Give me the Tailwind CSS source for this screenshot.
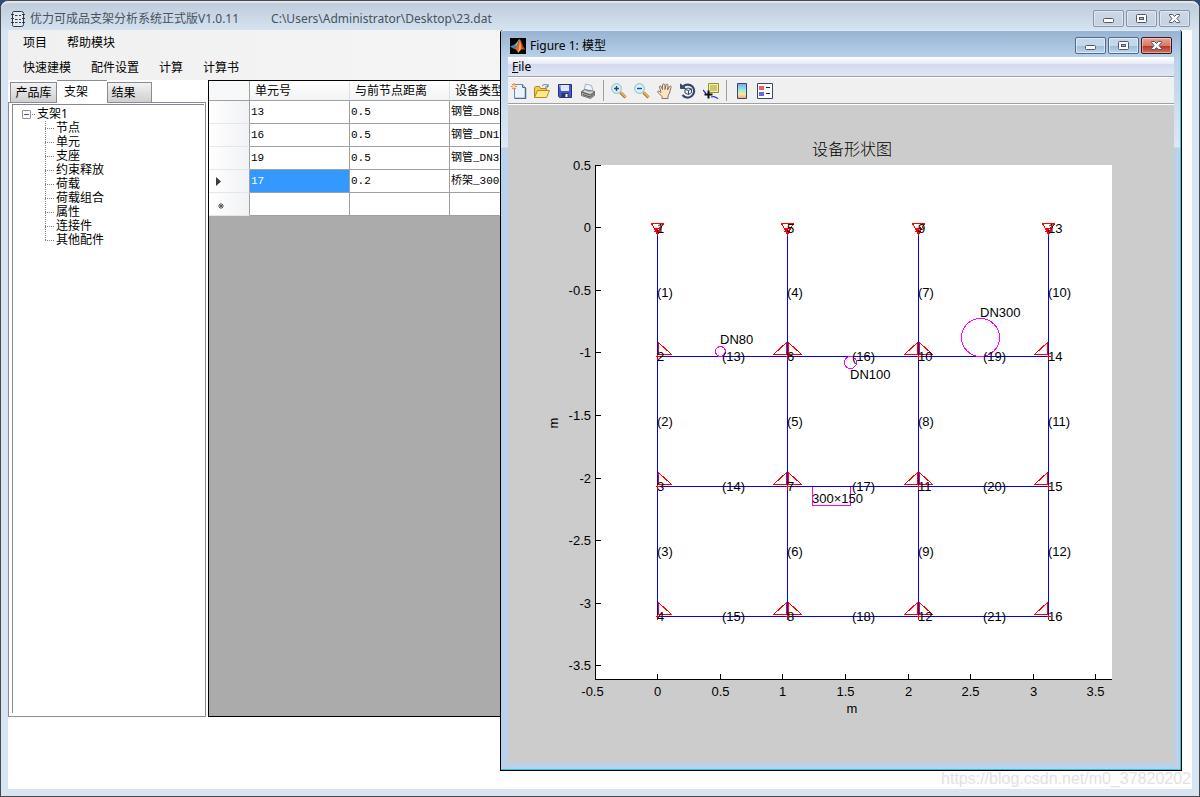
<!DOCTYPE html>
<html lang="zh-CN">
<head>
    <meta charset="UTF-8">
    <meta name="viewport" content="width=device-width, initial-scale=1.0">
    <title>优力可成品支架分析系统</title>
    <script src="https://cdn.jsdelivr.net/npm/@tailwindcss/browser@4"></script>
</head>
<body class="h-screen overflow-hidden bg-[#2b4a80] font-['Noto_Sans','Noto_Sans_CJK_SC',sans-serif] text-xs text-black">

    <!-- main window -->
    <div class="relative flex h-screen flex-col rounded-t-lg border border-[#4a4a4c] bg-[#d7e4f2]">
        <header class="flex h-[29px] shrink-0 items-center rounded-t-lg border-t-2 border-[#dfe6ee] bg-linear-to-b from-[#bfccdb] to-[#d5e3f1] pr-[9px] pl-[10px] text-[#46525f]">
            <svg class="mt-1 h-4 w-4" viewBox="0 0 16 16" fill="none" stroke="#333a42" stroke-width="1">
                <path d="M2.500.5h8q2 0 2 2v11q0 2-2 2h-8q-1 0-1-2v-11q0-2 1-2z" fill="#e3e9f0"/>
                <path d="M0 3.500h3M0 7.500h3M0 11.500h3M11 3.500h3M11 7.500h3M11 11.500h3M4 4.500h2.500M8 4.500h2M4 8.500h2.500M8 8.500h2M4 11.500h2.500M8 11.500h2"/>
            </svg>
            <h1 class="mt-1 ml-[3px] whitespace-nowrap">优力可成品支架分析系统正式版V1.0.11</h1>
            <span class="mt-1 ml-8 whitespace-nowrap">C:\Users\Administrator\Desktop\23.dat</span>
            <div class="mt-1 ml-auto flex gap-[2px]">
                <button aria-label="最小化" class="grid h-[17px] w-[31px] place-items-center rounded-[2px] border border-[#8792ab] bg-linear-to-b from-[#ccd8e6] to-[#c3d1e2] ring-1 ring-white/40 ring-inset">
                    <svg class="h-[13px] w-[13px]" viewBox="0 0 13 13"><rect x="1.500" y="6.500" width="10" height="4" rx="1" fill="#fff" stroke="#535666"/></svg>
                </button>
                <button aria-label="最大化" class="grid h-[17px] w-[31px] place-items-center rounded-[2px] border border-[#8792ab] bg-linear-to-b from-[#ccd8e6] to-[#c3d1e2] ring-1 ring-white/40 ring-inset">
                    <svg class="h-[13px] w-[13px]" viewBox="0 0 13 13" stroke="#535666"><rect x="1.500" y="2.500" width="10" height="8" rx="1" fill="#fff"/><rect x="4.500" y="5.500" width="4" height="2" fill="#b5c2d8"/></svg>
                </button>
                <button aria-label="关闭" class="grid h-[17px] w-[31px] place-items-center rounded-[2px] border border-[#8792ab] bg-linear-to-b from-[#ccd8e6] to-[#c3d1e2] ring-1 ring-white/40 ring-inset">
                    <svg class="h-[13px] w-[13px]" viewBox="0 0 13 13"><path d="M1.500 2.500h3l2 2 2-2h3v1L9 6.500l2.500 3v1h-3l-2-2-2 2h-3v-1L4 6.500l-2.500-3z" fill="#fff" stroke="#535666"/></svg>
                </button>
            </div>
        </header>

        <div class="mx-[7px] mb-[7px] flex min-h-0 flex-1 flex-col bg-white">
            <nav class="shrink-0 bg-linear-to-r from-[#f0f0f0] to-[#fcfcfc]">
                <div class="flex h-[25px] items-center gap-5 pl-[15px]">
                    <button>项目</button>
                    <button>帮助模块</button>
                </div>
                <div class="flex h-[25px] items-center gap-5 pl-[15px]">
                    <button>快速建模</button>
                    <button>配件设置</button>
                    <button>计算</button>
                    <button>计算书</button>
                </div>
            </nav>

            <div class="mb-[72px] flex min-h-0 flex-1 gap-[2px]">
                <!-- tabs and tree -->
                <aside class="flex w-[198px] shrink-0 flex-col">
                    <div class="flex h-[22px] items-end pl-[2px]" role="tablist">
                        <button role="tab" class="h-5 w-[47px] border border-b-0 border-[#898c95] bg-linear-to-b from-[#f2f2f2] to-[#cfcfcf] leading-5">产品库</button>
                        <button role="tab" aria-selected="true" class="relative -mb-px h-[23px] w-[50px] border-t border-[#898c95] bg-white pr-3 leading-5">支架</button>
                        <button role="tab" class="h-5 w-[45px] border border-b-0 border-[#898c95] bg-linear-to-b from-[#f2f2f2] to-[#cfcfcf] pr-3 leading-5">结果</button>
                    </div>
                    <div class="flex-1 border border-[#898c95] pt-px pr-px pb-[3px] pl-[3px]">
                        <div class="h-full border-t border-l border-[#828790] pt-[2px] pl-[9px]">
                            <div class="flex h-[14px] items-center leading-[14px]">
                                <button aria-label="折叠" class="grid h-[9px] w-[9px] place-items-center rounded-[1px] border border-[#919191] bg-white"><span class="h-px w-[5px] bg-[#3c5ba8]"></span></button>
                                <span class="mr-[2px] ml-px w-[3px] border-t border-dotted border-[#808080]"></span>
                                <span>支架1</span>
                            </div>
                            <ul class="relative pl-[23px] leading-[14px] before:absolute before:top-0 before:bottom-[7px] before:left-[23px] before:border-l before:border-dotted before:border-[#808080]">
                                <li class="flex h-[14px] items-center gap-[2px]"><span class="w-[9px] border-t border-dotted border-[#808080]"></span>节点</li>
                                <li class="flex h-[14px] items-center gap-[2px]"><span class="w-[9px] border-t border-dotted border-[#808080]"></span>单元</li>
                                <li class="flex h-[14px] items-center gap-[2px]"><span class="w-[9px] border-t border-dotted border-[#808080]"></span>支座</li>
                                <li class="flex h-[14px] items-center gap-[2px]"><span class="w-[9px] border-t border-dotted border-[#808080]"></span>约束释放</li>
                                <li class="flex h-[14px] items-center gap-[2px]"><span class="w-[9px] border-t border-dotted border-[#808080]"></span>荷载</li>
                                <li class="flex h-[14px] items-center gap-[2px]"><span class="w-[9px] border-t border-dotted border-[#808080]"></span>荷载组合</li>
                                <li class="flex h-[14px] items-center gap-[2px]"><span class="w-[9px] border-t border-dotted border-[#808080]"></span>属性</li>
                                <li class="flex h-[14px] items-center gap-[2px]"><span class="w-[9px] border-t border-dotted border-[#808080]"></span>连接件</li>
                                <li class="flex h-[14px] items-center gap-[2px]"><span class="w-[9px] border-t border-dotted border-[#808080]"></span>其他配件</li>
                            </ul>
                        </div>
                    </div>
                </aside>

                <!-- data grid -->
                <section class="mr-5 min-w-0 flex-1 overflow-hidden border border-black bg-[#ababab]">
                    <table class="w-[341px] table-fixed border-separate border-spacing-0 text-left">
                        <thead>
                            <tr class="h-5 bg-linear-to-b from-white to-[#f1f2f4]">
                                <th class="w-[41px] border-r border-b border-[#a0a0a0] bg-[#f7f8fa] p-0"></th>
                                <th class="w-25 border-r border-b border-r-[#dedfe1] border-b-[#a0a0a0] p-0 pl-[5px] leading-[18px] font-normal">单元号</th>
                                <th class="w-25 border-r border-b border-r-[#dedfe1] border-b-[#a0a0a0] p-0 pl-[5px] leading-[18px] font-normal">与前节点距离</th>
                                <th class="w-25 border-b border-[#a0a0a0] p-0 pl-[5px] leading-[18px] font-normal">设备类型</th>
                            </tr>
                        </thead>
                        <tbody class="bg-white font-['Liberation_Mono','Noto_Sans_CJK_SC',monospace] text-[11px] leading-4 [&_td]:border-r [&_td]:border-b [&_td]:border-[#a0a0a0] [&_td]:p-0 [&_td]:pl-px [&_th]:border-r [&_th]:border-b [&_th]:border-r-[#a0a0a0] [&_th]:border-b-[#e4e6e9] [&_th]:bg-linear-to-r [&_th]:from-white [&_th]:to-[#f1f2f5] [&_th]:p-0">
                            <tr class="h-[23px]"><th></th><td>13</td><td>0.5</td><td>钢管_DN8</td></tr>
                            <tr class="h-[23px]"><th></th><td>16</td><td>0.5</td><td>钢管_DN1</td></tr>
                            <tr class="h-[23px]"><th></th><td>19</td><td>0.5</td><td>钢管_DN3</td></tr>
                            <tr class="h-[23px]">
                                <th><svg class="ml-[7px] h-[9px] w-[5px]" viewBox="0 0 5 9"><path d="M0 0l5 4.500L0 9z" fill="#3c3c3c"/></svg></th>
                                <td class="bg-[#3399ff] text-white">17</td><td>0.2</td><td>桥架_300</td>
                            </tr>
                            <tr class="h-[23px]">
                                <th><svg class="mt-1 ml-[9px] h-[6px] w-[6px]" viewBox="0 0 6 6" stroke="#555"><path d="M3 0v6M0 3h6M1 1l4 4M5 1l-4 4"/></svg></th>
                                <td></td><td></td><td></td>
                            </tr>
                        </tbody>
                    </table>
                </section>
            </div>
        </div>

        <p class="absolute right-2 bottom-[7px] font-['Liberation_Sans',sans-serif] text-base leading-5 text-[#e2e2e2]">https://blog.csdn.net/m0_37820202</p>

        <!-- figure window -->
        <div class="absolute top-[29px] left-[499px] flex h-[741px] w-[682px] flex-col rounded-t-[3px] border border-t-0 border-black bg-[#b9d1ea]">
            <div class="relative flex min-h-0 flex-1 flex-col rounded-t-[3px] border-t border-r border-b border-t-[#dcebf8] border-r-[#2fc5dc] border-b-[#2fc5dc] bg-[linear-gradient(#98b3d1_0px,#b9d1ea_27px,#dce8f5_116px,#b9d1ea_117px)] pr-[6px] pb-[6px] pl-[7px]">
                <header class="flex h-[26px] shrink-0 items-center gap-[4px] pl-[2px]">
                    <svg class="mt-[3px] h-4 w-4" viewBox="0 0 16 16">
                        <rect width="16" height="16" fill="#000"/>
                        <path d="M0 8.500l4.500-2L6.500 8 4 11z" fill="#3b8fb5"/>
                        <path d="M4.500 6.500C7 5 7.500 2.500 9.500 1L7 9z" fill="#5fb3c9"/>
                        <path d="M4 11l2.500-3C8.500 6 8.500 2 9.800 1 11.500 2.500 13 9 15.500 12.500 13.500 10.500 12 11 10.500 12L8 15C7.500 13 6 11 4 11z" fill="#e2622a"/>
                        <path d="M9.800 1C10 5 9 9 8 15l2.500-3C11.500 9 10.500 4 9.800 1z" fill="#f6b24c"/>
                        <path d="M9.800 1c1.700 1.500 3.200 8 5.700 11.500-1.500-1-2-2-3-3z" fill="#8e2517"/>
                    </svg>
                    <h2 class="mt-[3px] whitespace-nowrap">Figure 1: 模型</h2>
                    <div class="mt-[3px] mr-[2px] ml-auto flex gap-[2px]">
                        <button aria-label="最小化" class="grid h-[17px] w-[31px] place-items-center rounded-[2px] border border-[#536a8b] bg-[linear-gradient(#c3d8ed_50%,#9dbad6_50%,#bdd6ec)] ring-1 ring-white/50 ring-inset">
                            <svg class="h-[13px] w-[13px]" viewBox="0 0 13 13"><rect x="1.500" y="6.500" width="10" height="4" rx="1" fill="#fff" stroke="#535666"/></svg>
                        </button>
                        <button aria-label="最大化" class="grid h-[17px] w-[31px] place-items-center rounded-[2px] border border-[#536a8b] bg-[linear-gradient(#c3d8ed_50%,#9dbad6_50%,#bdd6ec)] ring-1 ring-white/50 ring-inset">
                            <svg class="h-[13px] w-[13px]" viewBox="0 0 13 13" stroke="#535666"><rect x="1.500" y="2.500" width="10" height="8" rx="1" fill="#fff"/><rect x="4.500" y="5.500" width="4" height="2" fill="#8fb0d5"/></svg>
                        </button>
                        <button aria-label="关闭" class="grid h-[17px] w-[31px] place-items-center rounded-[2px] border border-[#431422] bg-[linear-gradient(#e8a398_0%,#d9796b_50%,#b5321d_50%,#cf7161)] ring-1 ring-white/40 ring-inset">
                            <svg class="h-[13px] w-[13px]" viewBox="0 0 13 13"><path d="M1.500 2.500h3l2 2 2-2h3v1L9 6.500l2.500 3v1h-3l-2-2-2 2h-3v-1L4 6.500l-2.500-3z" fill="#fff" stroke="#535666"/></svg>
                        </button>
                    </div>
                </header>

                <nav class="flex h-5 shrink-0 items-center border-b border-[#a0a0a0] bg-[linear-gradient(#ffffff_0%,#e8ebf6_35%,#d4d9ee_36%,#e1e6f6_100%)] pl-1">
                    <button><u>F</u>ile</button>
                </nav>

                <div class="flex h-[27px] shrink-0 items-center border-t border-b border-t-white border-b-[#a0a0a0] bg-[#f0f0f0]">
                    <button aria-label="新建" class="flex h-6 w-[23px] items-center pl-[3px]"><svg class="h-4 w-4" viewBox="0 0 16 16"><path d="M3.500 1.500h8l3 3v11h-11z" fill="#eaf3fd" stroke="#7288ae"/><path d="M11.500 1.500v3h3" fill="#b8d0f0" stroke="#52688f"/><path d="M14.500 5v10.500H4" fill="none" stroke="#52688f" stroke-width="1.500"/><path d="M3 0v7M0 3.500h6M1 1l4 5M5 1L1 6" stroke="#e67a50"/><circle cx="3" cy="3.500" r="1.500" fill="#ffdc86"/></svg></button>
                    <button aria-label="打开" class="flex h-6 w-[23px] items-center pl-[3px]"><svg class="h-4 w-4" viewBox="0 0 16 16"><path d="M.5 14.500v-10l1-1h4l1 2h6v3" fill="#f1cf55" stroke="#ae8423"/><path d="M.5 14.500l3-7h12l-3 7z" fill="#ffe88c" stroke="#b58b25"/><path d="M8 3c2-2 4-2 6 0m0-2v3h-3" fill="none" stroke="#5d7391"/></svg></button>
                    <button aria-label="保存" class="flex h-6 w-[23px] items-center pl-[3px]"><svg class="h-4 w-4" viewBox="0 0 16 16"><path d="M1.500 1.500h13v13h-12l-1-1z" fill="#4559c6" stroke="#27347b"/><path d="M4 2h8v6H4z" fill="#dce9fb"/><path d="M2 2h2v6z" fill="#94a4ed"/><path d="M4.500 10h7v5h-7z" fill="#2b356a"/><path d="M8.500 11h2v3h-2z" fill="#fff"/></svg></button>
                    <button aria-label="打印" class="flex h-6 w-[23px] items-center pl-[3px]"><svg class="h-4 w-4" viewBox="0 0 16 16"><path d="M4 8l1.500-7 6 1.500L13 8z" fill="#edf4ff" stroke="#a4b2c7"/><path d="M1.500 8.500l3-2 10 2v4l-4 3-9-3z" fill="#b0b0ae" stroke="#737371"/><path d="M1.500 9l9 3 4-3M3 11.500l7 2.500 4-3" fill="none" stroke="#555"/><path d="M4 8l6 2 2.500-1.500" fill="none" stroke="#eee"/><circle cx="12.500" cy="11" r=".7" fill="#4b4"/></svg></button>
                    <span class="mr-1 ml-[3px] h-[21px] w-px bg-[#a0a0a0]"></span>
                    <button aria-label="放大" class="flex h-6 w-[23px] items-center pl-[3px]"><svg class="h-4 w-4" viewBox="0 0 16 16"><path d="M9.500 9.500l5 5" stroke="#a66c25" stroke-width="3"/><path d="M10 9.500l5 5" stroke="#f5bb62" stroke-width="1.500"/><circle cx="5.500" cy="5.500" r="4.800" fill="#d9f2f7" stroke="#88b7c8"/><path d="M5.500 3v5M3 5.500h5" stroke="#174a93" stroke-width="1.400"/></svg></button>
                    <button aria-label="缩小" class="flex h-6 w-[23px] items-center pl-[3px]"><svg class="h-4 w-4" viewBox="0 0 16 16"><path d="M9.500 9.500l5 5" stroke="#a66c25" stroke-width="3"/><path d="M10 9.500l5 5" stroke="#f5bb62" stroke-width="1.500"/><circle cx="5.500" cy="5.500" r="4.800" fill="#d9f2f7" stroke="#88b7c8"/><path d="M3 5.500h5" stroke="#174a93" stroke-width="1.400"/></svg></button>
                    <button aria-label="平移" class="flex h-6 w-[23px] items-center pl-[3px]"><svg class="h-4 w-4" viewBox="0 0 16 16"><path d="M5 15.500v-2L1 9.500C0 8 1.500 7.500 2.500 8.500L4 9.500 2.500 4c0-1.500 1.500-1.500 2 0l1 2.500V2C6 .5 7.500.5 8 2v4.500L9 2c.5-1.500 2-1 2 .5L10.500 7l2-3.500c1-1 2-.5 1.500 1L12.500 10 11 13v2.500z" fill="#ffe1c4" stroke="#7b6657" stroke-width=".9"/></svg></button>
                    <button aria-label="旋转" class="flex h-6 w-[23px] items-center pl-[3px]"><svg class="h-4 w-4" viewBox="0 0 16 16" fill="none" stroke="#35496c"><path d="M3 3.500a6.500 6.500 0 1 1-.5 8.500" stroke-width="2.200"/><path d="M.5 1v4.500h5z" fill="#35496c"/><path d="M5 6.500l3-1.500 3.500 1v3.500L8.500 11.500 5 10zM5 6.500l3.500 1 3-1.500M8.500 7.500v4"/></svg></button>
                    <button aria-label="数据游标" class="flex h-6 w-[23px] items-center pl-[3px]"><svg class="h-4 w-4" viewBox="0 0 16 16"><path d="M5.500.5h10v9h-10z" fill="#f5efa0" stroke="#948f35"/><path d="M7 3h7M7 5h7M7 7h7" stroke="#a49d48"/><path d="M0 7l3 3.500M8 14l3-.5 4 2" stroke="#2026e8" stroke-width="1.200" fill="none"/><path d="M5.500 7.500v8M1.500 11.500h8" stroke="#111" stroke-width="2"/></svg></button>
                    <span class="mr-1 ml-[3px] h-[21px] w-px bg-[#a0a0a0]"></span>
                    <button aria-label="颜色栏" class="flex h-6 w-[23px] items-center pl-[3px]"><svg class="h-4 w-4" viewBox="0 0 16 16"><defs><linearGradient id="bar" x1="0" y1="0" x2="0" y2="1"><stop stop-color="#879df1"/><stop offset=".4" stop-color="#8fe6ec"/><stop offset=".7" stop-color="#f5ed98"/><stop offset="1" stop-color="#f2a187"/></linearGradient></defs><path d="M3.500.5h9v15h-9z" fill="url(#bar)" stroke="#35476d"/></svg></button>
                    <button aria-label="图例" class="flex h-6 w-[23px] items-center pl-[3px]"><svg class="h-4 w-4" viewBox="0 0 16 16"><path d="M.5.500h15v15H.5z" fill="#fff" stroke="#35476d"/><path d="M2 3h5v4H2z" fill="#e9605d"/><path d="M2 9h5v4H2z" fill="#6467e3"/><path d="M9 4.500h4M9 10.500h4" stroke="#222"/></svg></button>
                </div>

                <svg id="plot" class="min-h-0 w-full flex-1 border-t border-white bg-[#cccccc] font-['Liberation_Sans','Noto_Sans_CJK_SC',sans-serif] text-[13px]" viewBox="0 0 666 658" role="img" aria-label="设备形状图">
                    <rect x="87" y="60" width="517" height="515" fill="#fff"/>
                    <text x="344" y="50" text-anchor="middle" class="text-base font-light">设备形状图</text>
                    <text x="344" y="608" text-anchor="middle">m</text>
                    <text transform="translate(50 318) rotate(-90)" text-anchor="middle">m</text>
                </svg>
            </div>
        </div>
    </div>

    <script>
        const plot = document.getElementById('plot');

        function add(tag, attrs, text) {
            const el = document.createElementNS('http://www.w3.org/2000/svg', tag);
            for (const key in attrs) el.setAttribute(key, attrs[key]);
            if (text !== undefined) el.textContent = text;
            plot.appendChild(el);
        }

        function path(d, stroke) {
            add('path', { d, stroke, fill: 'none', 'shape-rendering': 'crispEdges' });
        }

        // axes
        path('M87.5 60V574.5H604', '#000');
        ['0.5', '0', '-0.5', '-1', '-1.5', '-2', '-2.5', '-3', '-3.5'].forEach((label, i) => {
            const y = Math.floor(60 + i * 62.6) + 0.5;
            path(`M87 ${y}h6`, '#000');
            add('text', { x: 83, y: y + 4.5, 'text-anchor': 'end' }, label);
        });
        ['-0.5', '0', '0.5', '1', '1.5', '2', '2.5', '3', '3.5'].forEach((label, i) => {
            const x = Math.floor(87 + i * 62.6) + 0.5;
            path(`M${x} 575v-6`, '#000');
            add('text', { x: i === 0 ? x - 3 : x, y: 591, 'text-anchor': 'middle' }, label);
        });

        // frame
        const xs = [149.5, 279.5, 410.5, 540.5];
        const ys = [123.5, 251.5, 381.5, 511.5];

        xs.forEach(x => path(`M${x} ${ys[0]}V${ys[3]}`, '#00f'));
        ys.slice(1).forEach(y => path(`M${xs[0]} ${y}H${xs[3]}`, '#00f'));

        // supports
        xs.forEach((x, c) => {
            path(`M${x - 6} ${ys[0] - 5}h12l-6 11zM${x - 3} ${ys[0]}h6l-3 4zM${x - 3} ${ys[0] + 3}l6 -5`, '#f00');
            ys.slice(1).forEach(y => {
                if (c < 3) path(`M${x + 1} ${y - 14}v12h13z`, '#f00');
                if (c > 0) path(`M${x - 1} ${y - 14}v12h-13z`, '#f00');
                path(`M${x - 2} ${y}h4M${x} ${y - 2}v5`, '#f00');
            });
        });

        // pipes and tray
        const pipes = [
            { x: 212, y: 246, r: 5, label: 'DN80', ty: 239 },
            { x: 342, y: 257, r: 6, label: 'DN100', ty: 274 },
            { x: 472, y: 232, r: 19, label: 'DN300', ty: 212 },
        ];
        pipes.forEach(p => {
            add('circle', { cx: p.x + 0.5, cy: p.y + 0.5, r: p.r, fill: 'none', stroke: '#f0f', 'shape-rendering': 'crispEdges' });
            add('text', { x: p.x, y: p.ty }, p.label);
        });
        path('M304.5 382V400.5H342.5V382', '#f0f');
        add('text', { x: 304, y: 398 }, '300×150');

        // node and member numbers
        xs.forEach((x, c) => {
            ys.forEach((y, r) => {
                add('text', { x: x - 0.5, y: y + 4.5 }, c * 4 + r + 1);
                if (r < 3) add('text', { x: x - 0.5, y: [192, 321, 451][r] }, `(${c * 3 + r + 1})`);
                if (r > 0 && c < 3) add('text', { x: x + 64.5, y: y + 4.5 }, `(${13 + c * 3 + r - 1})`);
            });
        });
    </script>
</body>
</html>
